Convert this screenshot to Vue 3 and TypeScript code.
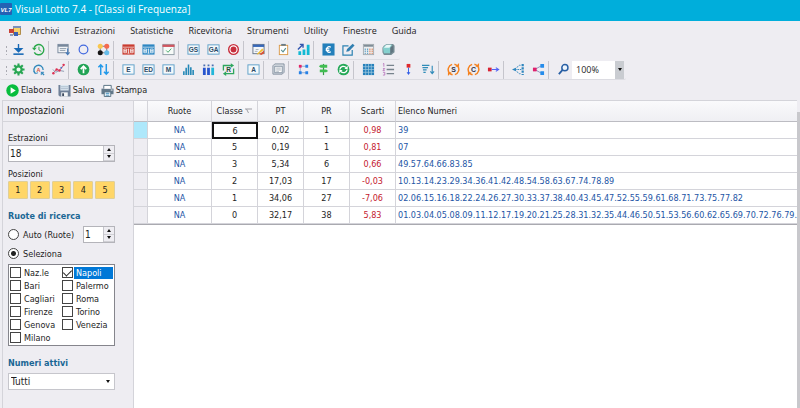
<script setup lang="ts">
import { ref } from 'vue'

interface Tool { name: string; art: string }
interface Row { ruota: string; classe: number; pt: string; pr: number; scarti: string; numeri: string }

const menus = ['Archivi', 'Estrazioni', 'Statistiche', 'Ricevitoria', 'Strumenti', 'Utility', 'Finestre', 'Guida']

const boxed = (text: string): string =>
  `<rect x="1" y="2" width="12" height="10" fill="#f4f8fb" stroke="#5b9fc8"/><text x="7" y="9.7" text-anchor="middle" font-size="7" font-weight="700" fill="#2b4a66">${text}</text>`

const calendar = (color: string): string =>
  `<rect x=".5" y="1.5" width="13" height="11" fill="${color}"/><path d="M1 4.500h12" stroke="#fff" stroke-width=".7"/><path d="M2 6.500h3v2H2zM2 8.500h3v2H2zM9 6.500h3v2H9zM9 8.500h3v2H9zM6.200 6.800l.8-.5v4.500M6 11h2" stroke="#fff" fill="none" stroke-width=".8"/>`

const cycle = (letter: string): string =>
  `<path d="M5.500 1.500A5.800 5.800 0 0 0 2.800 11M11.200 3A5.800 5.800 0 0 1 8.500 12.500M8 1.300A5.800 5.800 0 0 1 11 3M3 11a5.800 5.800 0 0 0 3 1.700" fill="none" stroke="#f58220" stroke-width="1.600"/><path d="M9 4h4V0zM5 10H1v4z" fill="#f58220"/><text x="7" y="9.700" text-anchor="middle" font-size="7.500" font-weight="700" fill="#334">${letter}</text>`

const upper: Tool[][] = [
  [
    { name: 'Scarica', art: '<path d="M7 1v8M3.500 6L7 9.500 10.500 6z" stroke="#1768b5" stroke-width="1.500" fill="#1768b5"/><path d="M1.500 12h11" stroke="#1768b5" stroke-width="1.700"/>' },
    { name: 'Cronologia', art: '<path d="M2.200 5A5.500 5.500 0 1 1 2.500 10" fill="none" stroke="#2aa84a" stroke-width="1.500"/><path d="M0 5h5L2.500 8z" fill="#2aa84a"/><path d="M7.500 4v3.500l2.500 1.500" stroke="#2aa84a" fill="none"/>' },
  ],
  [
    { name: 'Elenco', art: '<rect x="1" y="1.500" width="11" height="9" fill="#f2f4f7" stroke="#77879b"/><path d="M1 3h11" stroke="#77879b" stroke-width="2"/><path d="M3 6h7M3 8h6" stroke="#8c9aab"/><path d="M11.500 6v6M9.500 10l2 2.500 2-2.500" stroke="#4779b5" fill="none" stroke-width="1.200"/>' },
    { name: 'Cerchio', art: '<circle cx="7" cy="7" r="4.700" fill="none" stroke="#4168df" stroke-width="1.300"/>' },
    { name: 'Gruppi', art: '<path d="M3.500 3.500h7v7h-7z" fill="none" stroke="#555" stroke-width=".8"/><circle cx="3.500" cy="3.500" r="2.700" fill="#f9c74f"/><circle cx="10.500" cy="3.500" r="2.700" fill="#f46a4e"/><circle cx="3.500" cy="10.500" r="2.700" fill="#151515"/><circle cx="10.500" cy="10.500" r="2.700" fill="#66bdea"/>' },
  ],
  [
    { name: 'Calendario rosso', art: calendar('#c93b2f') },
    { name: 'Calendario blu', art: calendar('#2d86c2') },
    { name: 'Calendario verificato', art: '<rect x="1" y="1.500" width="12" height="11" fill="#f7faf8" stroke="#8d9ba5"/><path d="M.500 3h13" stroke="#cf5660" stroke-width="2.500"/><path d="M4.500 8l2 2 3.500-4" fill="none" stroke="#42a768"/>' },
  ],
  [
    { name: 'GS', art: boxed('GS') },
    { name: 'GA', art: boxed('GA') },
    { name: 'Bersaglio', art: '<circle cx="7" cy="7" r="5.200" fill="#fff" stroke="#c72e3c" stroke-width="1.500"/><circle cx="7" cy="7" r="3.200" fill="#c72e3c"/>' },
  ],
  [{ name: 'Modifica tabella', art: '<rect x="1" y="1.500" width="12" height="10" fill="#f2f6fa" stroke="#667488"/><path d="M1 3h12" stroke="#3767b8" stroke-width="2.500"/><path d="M4 7h3M3 9h3" stroke="#a8b0b8"/><path d="M5 12l6-6 1.500 1.500-6 5z" fill="#f3bc2d"/><path d="M8 12l5-4v3l-3 2z" fill="#d95335"/>' }],
  [
    { name: 'Appunti', art: '<rect x="2.500" y="2.500" width="9" height="10" fill="#fff" stroke="#d99948"/><path d="M4.500 2h5" stroke="#687c88" stroke-width="2"/><path d="M4.500 7.500l2 2L9.500 5.500" fill="none" stroke="#578f92" stroke-width="1.200"/>' },
    { name: 'Crescita', art: '<path d="M3 13V9M7.500 13V7M12 13V2" stroke="#12b9d4" stroke-width="3"/><path d="M1 7l5-5M3 1.500h3.500V5" fill="none" stroke="#3156af" stroke-width="1.500"/>' },
  ],
  [
    { name: 'Euro', art: '<rect x=".500" y=".500" width="13" height="13" fill="#237fbb"/><path d="M9.500 4.500a3 3 0 1 0 0 5M4 6.200h4M4 8h4" fill="none" stroke="#fff" stroke-width="1.300"/>' },
    { name: 'Modifica', art: '<path d="M7 3H1v10h10V7.500" fill="none" stroke="#2e83b3" stroke-width="1.300"/><path d="M4.500 9.500l1-3L11.500 .8l2 2L7.500 9z" fill="#317fb1"/>' },
    { name: 'Calcolatrice', art: '<rect x="1.500" y="1.500" width="11" height="11" fill="#eceef0" stroke="#a3abb1"/><path d="M2 3h10" stroke="#7f8d97" stroke-width="2"/><path d="M3.500 6v6M6 6v6" stroke="#6ba5c8" stroke-width="1.300" stroke-dasharray="1.500 .7"/><path d="M8.500 6v6M11 6v6" stroke="#e2906a" stroke-width="1.300" stroke-dasharray="1.500 .7"/>' },
    { name: 'Archivio', art: '<path d="M2 3l3-2h7l1.500 2v7L10 13H2L.500 10V5z" fill="#768c94"/><path d="M1 5l3-3h7l-2 3v6H2z" fill="#85d0ce"/><path d="M2 5l3-3h5L8 5z" fill="#e9f8f8"/><path d="M9 5l3-2v6l-3 3z" fill="#607580"/>' },
  ],
]

const lower: Tool[][] = [
  [
    { name: 'Opzioni', art: '<path d="M7 .500v13M.500 7h13M2.400 2.400l9.200 9.200M11.600 2.400l-9.200 9.200" stroke="#28a653" stroke-width="2.200"/><circle cx="7" cy="7" r="3.400" fill="#edf8ef" stroke="#28a653" stroke-width="2.400"/>' },
    { name: 'Analisi', art: '<path d="M3.500 11A5 5 0 1 1 12 7.500M10 10l3 3" fill="none" stroke="#3188bb" stroke-width="1.400"/><path d="M2 8.500l1.500 3 3-1M10 13v-3h3" fill="none" stroke="#3188bb"/><text x="7" y="9.200" text-anchor="middle" font-size="6" font-weight="700" fill="#d15347">A</text>' },
    { name: 'Andamento', art: '<path d="M1 11l4-4 3 1 5-6" fill="none" stroke="#cf4460"/><path d="M1 7l3 3 4-2 5 1" fill="none" stroke="#8796b0"/><g fill="#db3355"><circle cx="1.500" cy="11" r="1.300"/><circle cx="5" cy="7" r="1.300"/><circle cx="8" cy="8" r="1.300"/><circle cx="12.500" cy="2" r="1.300"/></g><circle cx="10" cy="5" r="1" fill="#4472c4"/>' },
  ],
  [
    { name: 'Su', art: '<circle cx="7" cy="7" r="6.300" fill="#22a456"/><path d="M7 11V4M4 6.500L7 3.500l3 3" fill="none" stroke="#fff" stroke-width="1.800"/>' },
    { name: 'Ordina', art: '<path d="M4 13V2M1.500 4.500L4 2l2.500 2.500M10 1v11M7.500 9.500L10 12l2.500-2.500" fill="none" stroke="#249ae9" stroke-width="1.600"/>' },
  ],
  [
    { name: 'E', art: boxed('E') },
    { name: 'ED', art: boxed('ED') },
    { name: 'M', art: boxed('M') },
    { name: 'Istogramma', art: '<path d="M2 13V9M4.500 13V5M7 13V1.500M9.500 13V4.500M12 13V7.500" stroke="#2387b6" stroke-width="1.700"/>' },
    { name: 'Ruote', art: '<path d="M2.500 13V5M7 13V5" stroke="#2856ce" stroke-width="3"/><path d="M11.500 13V5" stroke="#22b6d9" stroke-width="3"/><path d="M2.500 1.500v2M7 1.500v2M11.500 1.500v2" stroke="#4a6fb0" stroke-width="2"/>' },
    { name: 'Ripeti', art: '<path d="M1.500 8V2.700h9M12.500 6v5.500h-9" fill="none" stroke="#2fa75e" stroke-width="1.400"/><path d="M9.500 .200L13 2.700 9.500 5.200zM4.500 9L1 11.500 4.500 14z" fill="#2fa75e"/><text x="7" y="9.500" text-anchor="middle" font-size="7" font-weight="700" fill="#254b36">R</text>' },
  ],
  [{ name: 'A', art: boxed('A') }],
  [{ name: 'Schede', art: '<path d="M1 12V3l2-2h10v9l-2 2z" fill="#dde2e7" stroke="#7f8d9d"/><rect x="3" y="3.500" width="8" height="7" fill="#fff" stroke="#8391a1"/><path d="M4.500 5.500h5M4.500 7.500h5M4.500 9.500h3" stroke="#8c99a6" stroke-width=".8"/>' }],
  [
    { name: 'Nodi', art: '<path d="M3.500 3.500h7M3.500 10.500h7M3.500 4v6" fill="none" stroke="#8aa6d0"/><path d="M2 2h3v3H2z" fill="#e52465"/><path d="M9 2h3v3H9zM2 9h3v3H2zM9 9h3v3H9z" fill="#2681e6"/>' },
    { name: 'Direzioni', art: '<path d="M7 1v12" stroke="#349b44" stroke-width="1.300"/><path d="M4 2h7v3H4L2 3.500zM3 7h7l2 1.500-2 1.500H3z" fill="#42bd52"/>' },
    { name: 'Aggiorna', art: '<circle cx="7" cy="7" r="6.300" fill="#25a858"/><path d="M3 7a4 4 0 0 1 7-2M11 7a4 4 0 0 1-7 2" fill="none" stroke="#fff" stroke-width="1.400"/><path d="M11.500 3v3.500H8zM2.500 11V7.500H6z" fill="#fff"/>' },
  ],
  [
    { name: 'Griglia', art: '<rect x="1" y="1" width="12" height="12" fill="#2680bb"/><path d="M4 1v12M7 1v12M10 1v12M1 4h12M1 7h12M1 10h12" stroke="#9cc8df" stroke-width=".8"/>' },
    { name: 'Lista', art: '<path d="M5 2.500h8M5 7h8M5 11.500h8" stroke="#77838d" stroke-width="1.400"/><path d="M1 1l1-.500V4M1 6h2L1 8h2M1 10h2v3H1" fill="none" stroke="#b162b5" stroke-width=".8"/>' },
    { name: 'Giù', art: '<path d="M5 1h4v4H5z" fill="#df292d"/><path d="M7 5v6" stroke="#315de7"/><path d="M5 10h4l-2 3z" fill="#315de7"/>' },
    { name: 'Decrescente', art: '<path d="M0 2.500h8M.500 5h6M1 7.500h4M1.500 10h2.500" stroke="#2f8cb8" stroke-width="1.400"/><path d="M11 3v8M9 9l2 2.500L13 9" fill="none" stroke="#318bba" stroke-width="1.200"/>' },
  ],
  [
    { name: 'S', art: cycle('S') },
    { name: 'C', art: cycle('C') },
    { name: 'Avanti', art: '<path d="M1 5h4v4H1z" fill="#d92434"/><path d="M5 7h7M9.500 5l3 2-3 2" fill="none" stroke="#5363f5" stroke-width="1.200"/>' },
  ],
  [
    { name: 'Albero', art: '<path d="M3 6.500l5-4h2M3 7.500l5 4h2M3 7h7" fill="none" stroke="#2f86be" stroke-dasharray="2 .8"/><path d="M0 7l4-2v4z" fill="#2f86be"/><path d="M11.500 1v12" stroke="#2f86be" stroke-width="2.400" stroke-dasharray="2.400 1.200"/>' },
    { name: 'Condividi', art: '<path d="M3 7l7-4M3 7l7 4" stroke="#8b90ba"/><path d="M1 5h4v4H1z" fill="#e0206d"/><path d="M9 1h4v4H9zM9 9h4v4H9z" fill="#258ceb"/>' },
  ],
  [{ name: 'Zoom', art: '<circle cx="8.500" cy="5" r="3.300" fill="#edf5fc" stroke="#285fa4" stroke-width="1.600"/><path d="M6 7.500L2 12" stroke="#285fa4" stroke-width="2"/>' }],
]

const bars = [upper, lower]

const actions: Tool[] = [
  { name: 'Elabora', art: '<circle cx="7" cy="7" r="6.700" fill="#08bd3d"/><path d="M5 3.500L10.500 7 5 10.500z" fill="#fff"/>' },
  { name: 'Salva', art: '<path d="M.500 1h13v12.500H2L.500 12z" fill="#708098"/><path d="M2.500 1h9v6h-9z" fill="#dce7f1"/><path d="M3 3h8M3 5h8" stroke="#9fb1c2" stroke-width=".8"/><path d="M3.500 9h7v4.500h-7z" fill="#f6f7f8"/><path d="M4.500 10h2v3h-2z" fill="#3e4b60"/>' },
  { name: 'Stampa', art: '<path d="M.500 5h13v6H.500z" fill="#64798a"/><path d="M3 5V1.500h8V5" fill="#fff" stroke="#526d80"/><path d="M3.500 8.500h7v5h-7z" fill="#fff" stroke="#526d80"/><path d="M5 10h4M5 12h4" stroke="#2f84b7"/><path d="M10.500 6.500h2" stroke="#fff"/>' },
]

const rows: Row[] = [
  { ruota: 'NA', classe: 6, pt: '0,02', pr: 1, scarti: '0,98', numeri: '39' },
  { ruota: 'NA', classe: 5, pt: '0,19', pr: 1, scarti: '0,81', numeri: '07' },
  { ruota: 'NA', classe: 3, pt: '5,34', pr: 6, scarti: '0,66', numeri: '49.57.64.66.83.85' },
  { ruota: 'NA', classe: 2, pt: '17,03', pr: 17, scarti: '-0,03', numeri: '10.13.14.23.29.34.36.41.42.48.54.58.63.67.74.78.89' },
  { ruota: 'NA', classe: 1, pt: '34,06', pr: 27, scarti: '-7,06', numeri: '02.06.15.16.18.22.24.26.27.30.33.37.38.40.43.45.47.52.55.59.61.68.71.73.75.77.82' },
  { ruota: 'NA', classe: 0, pt: '32,17', pr: 38, scarti: '5,83', numeri: '01.03.04.05.08.09.11.12.17.19.20.21.25.28.31.32.35.44.46.50.51.53.56.60.62.65.69.70.72.76.79.8' },
]

const wheels = ['Naz.le', 'Bari', 'Cagliari', 'Firenze', 'Genova', 'Milano', 'Napoli', 'Palermo', 'Roma', 'Torino', 'Venezia']
const picked = ref<string[]>(['Napoli'])
const mode = ref<'auto' | 'select'>('select')
const draws = ref(18)
const autoCount = ref(1)
const zoom = ref('100%')
const active = ref('Tutti')
const selectedRow = ref(0)
</script>

<template>
  <div class="window">
    <header class="title">
      <svg class="logo" viewBox="0 0 12 12" aria-hidden="true">
        <rect width="12" height="12" rx="1" fill="#2461b4" />
        <text x="6" y="8.500" text-anchor="middle" font-size="6" font-weight="700" font-style="italic" fill="#fff">VL7</text>
      </svg>
      <h1>Visual Lotto 7.4 - [Classi di Frequenza]</h1>
    </header>

    <nav class="menu">
      <svg class="form-icon" viewBox="0 0 12 12" aria-hidden="true">
        <path d="M4.500 1.500h7v8h-7z" fill="#f6d36b" stroke="#b18d4a" />
        <path d="M4 2h8" stroke="#7890bd" stroke-width="2" />
        <path d="M0 4h5v4H0z" fill="#c84237" />
        <path d="M5 7h4v4H5z" fill="#3a62b7" />
        <path d="M1 9h3v2H1z" fill="#8f9fbe" />
      </svg>
      <a v-for="item in menus" :key="item" href="#">{{ item }}</a>
    </nav>

    <div v-for="(bar, b) in bars" :key="b" class="toolbar" role="toolbar">
      <span class="grip"></span>
      <div v-for="(group, g) in bar" :key="g" class="group">
        <button v-for="tool in group" :key="tool.name" class="tool" type="button" :aria-label="tool.name">
          <svg viewBox="0 0 14 14" v-html="tool.art"></svg>
        </button>
      </div>
      <div v-if="b === 1" class="drop zoom">
        <select v-model="zoom" aria-label="Zoom pagina">
          <option>100%</option>
        </select>
        <span class="arrow"></span>
      </div>
    </div>

    <div class="actions">
      <button v-for="action in actions" :key="action.name" type="button">
        <svg viewBox="0 0 14 14" aria-hidden="true" v-html="action.art"></svg>{{ action.name }}
      </button>
    </div>

    <main class="content">
      <aside class="side">
        <h2>Impostazioni</h2>
        <form class="settings" @submit.prevent>
          <label class="caption" for="draws">Estrazioni</label>
          <div class="spin">
            <input id="draws" v-model.number="draws" type="number">
            <div class="steps">
              <button type="button" aria-label="Aumenta estrazioni" @click="draws++"><i class="up"></i></button>
              <button type="button" aria-label="Riduci estrazioni" @click="draws--"><i class="down"></i></button>
            </div>
          </div>
          <span class="caption second">Posizioni</span>
          <div class="positions">
            <button v-for="n in 5" :key="n" type="button">{{ n }}</button>
          </div>

          <h3>Ruote di ricerca</h3>
          <div class="mode">
            <label><input v-model="mode" type="radio" name="mode" value="auto">Auto (Ruote)</label>
            <div class="spin small">
              <input v-model.number="autoCount" type="number" aria-label="Numero ruote">
              <div class="steps">
                <button type="button" aria-label="Aumenta ruote" @click="autoCount++"><i class="up"></i></button>
                <button type="button" aria-label="Riduci ruote" @click="autoCount--"><i class="down"></i></button>
              </div>
            </div>
          </div>
          <div class="mode">
            <label><input v-model="mode" type="radio" name="mode" value="select">Seleziona</label>
          </div>

          <div class="wheels">
            <label v-for="wheel in wheels" :key="wheel">
              <input v-model="picked" type="checkbox" :value="wheel">
              <span :class="{ picked: picked.includes(wheel) }">{{ wheel }}</span>
            </label>
          </div>

          <h3><label for="active">Numeri attivi</label></h3>
          <div class="drop">
            <select id="active" v-model="active">
              <option>Tutti</option>
            </select>
            <span class="arrow"></span>
          </div>
        </form>
      </aside>

      <section class="grid">
        <table>
          <colgroup>
            <col class="c-mark"><col class="c-wheel"><col class="c-num"><col class="c-num"><col class="c-num"><col class="c-num"><col>
          </colgroup>
          <thead>
            <tr>
              <th></th>
              <th>Ruote</th>
              <th>Classe <svg class="sort" viewBox="0 0 7 6" aria-hidden="true"><path d="M0 1h7M1.500 1L3.500 5" fill="none" stroke="#a0a0a6" /></svg></th>
              <th>PT</th>
              <th>PR</th>
              <th>Scarti</th>
              <th class="list">Elenco Numeri</th>
            </tr>
          </thead>
          <tbody>
            <tr v-for="(row, i) in rows" :key="row.classe" :class="{ current: i === selectedRow }" @click="selectedRow = i">
              <td class="mark"></td>
              <td class="blue">{{ row.ruota }}</td>
              <td class="classe">{{ row.classe }}</td>
              <td>{{ row.pt }}</td>
              <td>{{ row.pr }}</td>
              <td class="red">{{ row.scarti }}</td>
              <td class="blue list">{{ row.numeri }}</td>
            </tr>
          </tbody>
        </table>
      </section>
      <div class="scroll"></div>
    </main>
  </div>
</template>

<style>
body {
  background: #eeedf2;
}
</style>

<style scoped>
* {
  box-sizing: border-box;
}

.window {
  display: flex;
  flex-direction: column;
  min-height: 100vh;
  background: #eeedf2;
  color: #1e1e1e;
  font: 9px/12px "DejaVu Sans Condensed", "DejaVu Sans", sans-serif;
}

button, input, select {
  margin: 0;
  padding: 0;
  border: 0;
  border-radius: 0;
  background: none;
  color: inherit;
  font: inherit;
}

h1, h2, h3 {
  margin: 0;
}

.title {
  display: flex;
  align-items: center;
  gap: 3px;
  height: 21px;
  padding-bottom: 3px;
  background: #00aedb;
  color: #fff;
}

.title h1 {
  font: 10px/14px "Open Sans", "Noto Sans", sans-serif;
}

.logo {
  width: 12px;
  height: 12px;
  font-family: "Liberation Sans", sans-serif;
}

.menu {
  display: flex;
  align-items: center;
  gap: 15px;
  height: 19px;
  padding-left: 9px;
  font: 9px/12px "Open Sans", "Noto Sans", sans-serif;
}

.menu a {
  color: #222;
  text-decoration: none;
}

.form-icon {
  width: 12px;
  height: 12px;
  margin-right: -5px;
}

.toolbar {
  display: flex;
  align-items: center;
  align-self: flex-start;
  height: 20px;
  padding: 0 2px 0 5px;
  border-bottom: 1px solid #dcdce2;
  border-radius: 2px;
}

.grip {
  width: 3px;
  height: 10px;
  background: radial-gradient(circle, #aaaab2 1px, transparent 1px) 0 0 / 3px 4px;
}

.group {
  display: flex;
}

.group + .group {
  padding-left: 4px;
  border-left: 1px solid #c5c5cc;
}

.tool {
  display: grid;
  place-items: center;
  width: 20px;
  height: 18px;
}

.tool svg {
  width: 13px;
  height: 13px;
  font-family: "Liberation Sans", sans-serif;
}

.actions {
  display: flex;
  align-items: center;
  gap: 6px;
  height: 20px;
  padding-left: 6px;
}

.actions button {
  display: flex;
  align-items: center;
  gap: 2px;
}

.actions svg {
  width: 13px;
  height: 13px;
}

.content {
  display: flex;
  flex: 1;
  padding-left: 2px;
}

.side {
  flex: 0 0 132px;
  border: 1px solid #d4d4da;
  border-width: 1px 1px 0;
}

.side h2 {
  height: 21px;
  padding-left: 4px;
  border-bottom: 1px solid #d4d4da;
  font: 10px/20px "DejaVu Sans Condensed", "DejaVu Sans", sans-serif;
}

.settings {
  display: flex;
  flex-direction: column;
  width: 112px;
  padding: 10px 0 0 5px;
}

.caption {
  height: 13px;
}

.second {
  margin-top: 6px;
}

.spin {
  display: flex;
  height: 17px;
  border: 1px solid #b4b4ba;
  background: #fff;
}

.spin input {
  flex: 1;
  min-width: 0;
  padding-left: 1px;
  font-size: 10px;
  appearance: textfield;
  outline: 0;
}

.spin input::-webkit-inner-spin-button {
  display: none;
}

.steps {
  display: grid;
  width: 11px;
  border-left: 1px solid #c6c6cc;
}

.steps button {
  display: grid;
  place-items: center;
  border-bottom: 1px solid #d0d0d5;
  background: #eeedf2;
}

.up, .down, .arrow {
  border: solid transparent;
  border-width: 0 2px 3px;
  border-bottom-color: #111;
}

.down, .arrow {
  border-width: 3px 2px 0;
  border-top-color: #111;
}

.small {
  width: 32px;
}

.positions {
  display: flex;
  gap: 2px;
}

.positions button {
  flex: 1;
  height: 18px;
  border: 1px solid #e0cf98;
  border-radius: 1px;
  background: #ffd668;
}

.side h3 {
  margin: 11px 0 4px;
  color: #1a6795;
  font: bold 9px/12px "DejaVu Sans Condensed", "DejaVu Sans", sans-serif;
}

.mode {
  display: flex;
  align-items: center;
  justify-content: space-between;
  height: 17px;
  margin-bottom: 2px;
}

.mode label {
  display: flex;
  align-items: center;
  gap: 4px;
}

.mode input[type="radio"] {
  width: 11px;
  height: 11px;
  border: 1px solid #444;
  border-radius: 50%;
  background: #fff;
  appearance: none;
}

.mode input[type="radio"]:checked {
  background: radial-gradient(circle, #222 2px, #fff 3px);
}

.wheels {
  display: grid;
  grid-template-columns: 52px 1fr;
  grid-template-rows: repeat(6, 13px);
  grid-auto-flow: column;
  padding: 1px;
  border: 1px solid #85858c;
  background: #fff;
}

.wheels label {
  display: flex;
  align-items: center;
  gap: 1px;
}

.wheels input {
  display: grid;
  flex: none;
  place-content: center;
  width: 11px;
  height: 11px;
  border: 1px solid #444;
  background: #fff;
  appearance: none;
}

.wheels input:checked::before {
  width: 4px;
  height: 7px;
  margin-bottom: 2px;
  border: solid #222;
  border-width: 0 1px 1px 0;
  content: "";
  transform: rotate(45deg);
}

.wheels span {
  flex: 1;
  padding-left: 2px;
}

.wheels .picked {
  background: #0078d7;
  color: #fff;
}

.drop {
  display: grid;
  grid-template-columns: 1fr 12px;
  height: 17px;
  border: 1px solid #c6c6cc;
  background: #fff;
}

.drop select {
  grid-area: 1 / 1 / 2 / 3;
  padding-left: 2px;
  appearance: none;
  font-size: 10px;
  outline: 0;
}

.drop .arrow {
  grid-area: 1 / 2;
  place-self: center;
  pointer-events: none;
}

.zoom {
  grid-template-columns: 1fr 9px;
  width: 52px;
  height: 18px;
  margin-left: -1px;
  border: 0;
  background: linear-gradient(to left, #c9ccd1 9px, #fff 9px);
}

.zoom select {
  padding-left: 4px;
  font: 9px/12px "Open Sans", "Noto Sans", sans-serif;
}

.grid {
  flex: 1;
  min-width: 0;
  overflow: hidden;
  border-top: 1px solid #d4d4da;
  background: #fff;
}

table {
  width: 100%;
  border-bottom: 1px solid #aaaab0;
  border-spacing: 0;
  table-layout: fixed;
}

.c-mark {
  width: 14px;
}

.c-wheel {
  width: 64px;
}

.c-num {
  width: 46px;
}

th, td {
  overflow: hidden;
  height: 17px;
  padding: 0;
  border: solid #d4d4da;
  border-width: 0 1px 1px 0;
  font-weight: 400;
  text-align: center;
  white-space: nowrap;
}

th {
  height: 21px;
  border-bottom-color: #bcbcc2;
  background: linear-gradient(#fafafc, #efeff3);
}

.list {
  padding-left: 2px;
  border-right: 0;
  text-align: left;
}

.sort {
  width: 7px;
  height: 6px;
}

.mark {
  background: #eeedf2;
}

.current .mark {
  background: #aee8fb;
}

.current .classe {
  border: 0;
  outline: 2px solid #111;
  outline-offset: -2px;
}

.blue {
  color: #1d55a5;
}

.red {
  color: #c4202f;
}

.scroll {
  flex: 0 0 3px;
  margin-top: 12px;
  background: #c8c8cc;
}
</style>
